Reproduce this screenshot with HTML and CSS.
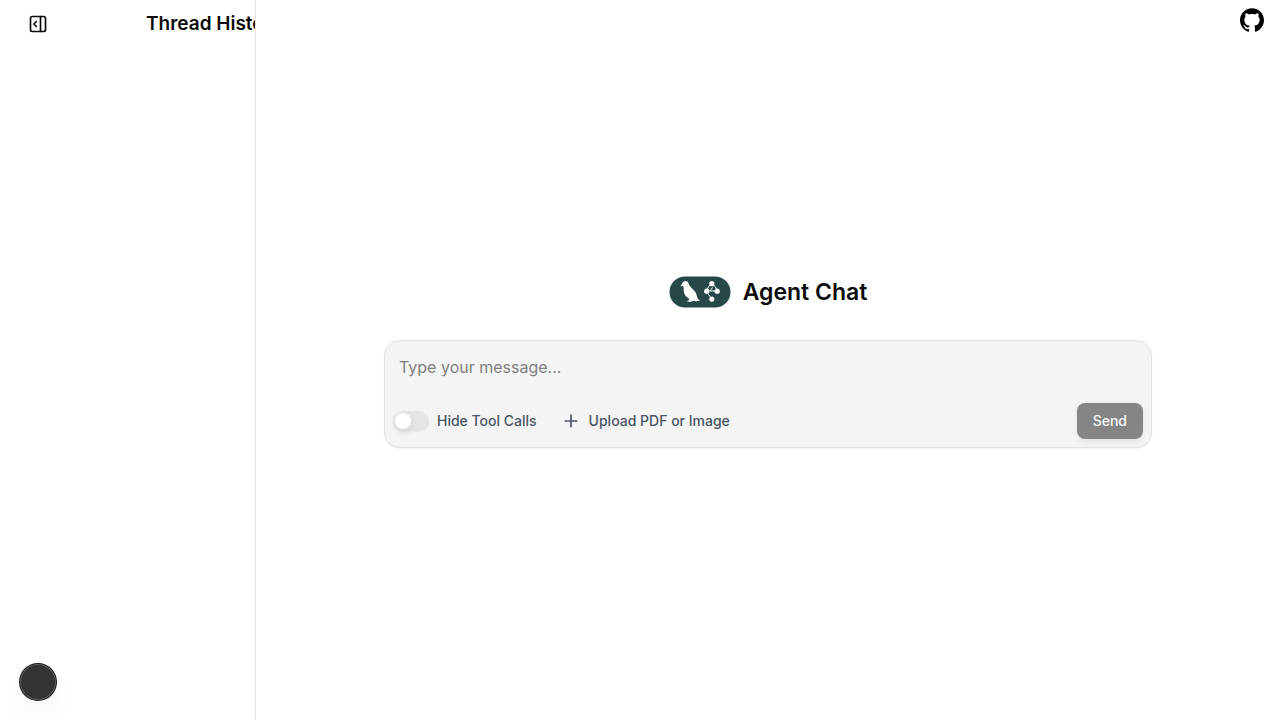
FILE: index.html
```html
<!DOCTYPE html>
<html lang="en">
<head>
<meta charset="utf-8">
<meta name="viewport" content="width=device-width, initial-scale=1">
<title>Agent Chat</title>
<link rel="stylesheet" href="styles.css">
</head>
<body>
<div class="app">
  <aside class="sidebar">
    <div class="sidebar-header">
      <button class="icon-button" type="button" aria-label="Close thread history">
        <svg class="icon" viewBox="0 0 24 24" aria-hidden="true"><rect width="18" height="18" x="3" y="3" rx="2"/><path d="M15 3v18"/><path d="m10 15-3-3 3-3"/></svg>
      </button>
      <h2 class="sidebar-title">Thread History</h2>
    </div>
  </aside>
  <main class="main">
    <header class="topbar">
      <a class="github" href="#" aria-label="Open GitHub repo">
        <svg viewBox="0 0 24 24" aria-hidden="true"><path d="M12 .297c-6.63 0-12 5.373-12 12 0 5.303 3.438 9.8 8.205 11.385.6.113.82-.258.82-.577 0-.285-.01-1.04-.015-2.04-3.338.724-4.042-1.61-4.042-1.61C4.422 18.07 3.633 17.7 3.633 17.7c-1.087-.744.084-.729.084-.729 1.205.084 1.838 1.236 1.838 1.236 1.07 1.835 2.809 1.305 3.495.998.108-.776.417-1.305.76-1.605-2.665-.3-5.466-1.332-5.466-5.93 0-1.31.465-2.38 1.235-3.22-.135-.303-.54-1.523.105-3.176 0 0 1.005-.322 3.3 1.23.96-.267 1.98-.399 3-.405 1.02.006 2.04.138 3 .405 2.28-1.552 3.285-1.23 3.285-1.23.645 1.653.24 2.873.12 3.176.765.84 1.23 1.91 1.23 3.22 0 4.61-2.805 5.625-5.475 5.92.42.36.81 1.096.81 2.22 0 1.606-.015 2.896-.015 3.286 0 .315.21.69.825.57C20.565 22.092 24 17.592 24 12.297c0-6.627-5.373-12-12-12"/></svg>
      </a>
    </header>
    <section class="welcome">
      <div class="brand">
        <svg class="logo" viewBox="0 0 62 32" aria-hidden="true">
          <rect class="logo-pill" x=".5" y=".5" width="61" height="31" rx="15.5"/>
          <path class="logo-shape" d="M11.4 10.2c.2-1 .8-1.5 1.6-1.8.2-2.1 1.6-3.4 3.4-3.4 1.7 0 2.9 1 3.2 2.6.3 1.5.9 2.3 2 3.4 3.2 3 5.8 5.3 6.3 9.3.2 1.3.8 2.3 1.6 3.1l1.8 1.6-2.8-.2-1.2.6-2.2-.7-1.7.2c-.6.3-.8.9-1.5 1l-.6-.5-1.1.6-.4-.6-2 .2 1-1.2 1.4-.5-.3-1.3c-3.2-1.6-5-4.3-5.2-7.5-.1-2.2.2-3.9-.6-5.1z"/>
          <g class="logo-links"><path d="M41.6 8.6Q39 10.5 38.3 13.5M44 8.6Q46.8 10.5 47.7 13.5M38.8 17.3l2.2 3.4M39 15h7.5M41 15l2.5-3.5"/></g>
          <g class="logo-shape"><circle cx="42.8" cy="7.7" r="2.6"/><circle cx="37.7" cy="15.2" r="2.6"/><circle cx="48.2" cy="15.2" r="2.6"/><circle cx="42.8" cy="23.1" r="2.6"/></g>
        </svg>
        <h1 class="brand-title">Agent Chat</h1>
      </div>
      <form class="composer">
        <textarea class="message" rows="1" placeholder="Type your message..." aria-label="Message"></textarea>
        <div class="actions">
          <label class="option">
            <input class="switch" type="checkbox" role="switch">
            <span>Hide Tool Calls</span>
          </label>
          <button class="upload" type="button">
            <svg class="icon" viewBox="0 0 24 24" aria-hidden="true"><path d="M5 12h14M12 5v14"/></svg>
            <span>Upload PDF or Image</span>
          </button>
          <button class="send" type="submit" disabled>Send</button>
        </div>
      </form>
    </section>
  </main>
  <button class="dev-badge" type="button" aria-label="Open developer tools"></button>
</div>
</body>
</html>
```
FILE: styles.css
```css
* {
  box-sizing: border-box;
}

body {
  margin: 0;
  background: #fff;
  color: #0a0a0a;
  font-family: Inter, "Liberation Sans", sans-serif;
  font-size: 14px;
  line-height: 20px;
}

button,
textarea {
  font: inherit;
  color: inherit;
  border: 0;
  background: none;
}

h1,
h2 {
  margin: 0;
  font-weight: 600;
}

.app {
  display: flex;
  min-height: 100vh;
}

.sidebar {
  flex: 0 0 256px;
  overflow: hidden;
  border-right: 1px solid #e2e2e2;
}

.sidebar-header {
  display: flex;
  align-items: center;
  gap: 90px;
  padding: 6px 0 0 20px;
}

.icon-button {
  display: flex;
  flex: none;
  padding: 8px;
  border-radius: 6px;
}

.icon {
  width: 20px;
  height: 20px;
  fill: none;
  stroke: currentColor;
  stroke-width: 2;
  stroke-linecap: round;
  stroke-linejoin: round;
}

.sidebar-title {
  font-size: 19px;
  line-height: 28px;
  white-space: nowrap;
}

.main {
  display: grid;
  flex: 1;
  grid-template-rows: 1fr auto 1fr;
  min-width: 0;
}

.topbar {
  display: flex;
  justify-content: flex-end;
  align-items: flex-start;
  padding: 8px 16px;
}

.github {
  display: flex;
}

.github svg {
  width: 24px;
  height: 24px;
  fill: #000;
}

.welcome {
  display: flex;
  flex-direction: column;
  gap: 32px;
  width: 100%;
  max-width: 768px;
  margin: 0 auto;
  padding-top: 4px;
}

.brand {
  display: flex;
  justify-content: center;
  align-items: center;
  gap: 12px;
}

.logo {
  width: 62px;
  height: 32px;
}

.logo-pill {
  fill: #264849;
}

.logo-shape {
  fill: #fff;
}

.logo-links {
  fill: none;
  stroke: #fff;
  stroke-width: 1;
}

.brand-title {
  font-size: 23px;
  line-height: 32px;
}

.composer {
  display: flex;
  flex-direction: column;
  border: 1px solid #e2e2e2;
  border-radius: 16px;
  background: #f4f4f4;
  box-shadow: 0 1px 2px rgb(0 0 0 / 6%);
}

.message {
  padding: 14px 14px 0;
  height: 54px;
  font-size: 16px;
  line-height: 24px;
  resize: none;
  outline: none;
}

.message::placeholder {
  color: #7f7f7f;
  opacity: 1;
}

.actions {
  display: flex;
  align-items: center;
  gap: 24px;
  padding: 8px;
}

.option,
.upload {
  display: flex;
  align-items: center;
  gap: 8px;
  padding: 0;
  color: #4a5565;
  font-weight: 500;
}

.switch {
  appearance: none;
  display: flex;
  align-items: center;
  width: 36px;
  height: 20px;
  margin: 0;
  padding: 0 2px;
  border-radius: 10px;
  background: #e5e5e5;
  box-shadow: 0 1px 2px rgb(0 0 0 / 5%);
}

.switch::before {
  content: "";
  width: 16px;
  height: 16px;
  border-radius: 50%;
  background: #fff;
  box-shadow: 0 4px 8px rgb(0 0 0 / 8%);
}

.switch:checked {
  justify-content: flex-end;
  background: #171717;
}

.send {
  height: 36px;
  margin-left: auto;
  padding: 0 16px;
  border-radius: 8px;
  background: #858585;
  color: #fafafa;
  font-weight: 500;
  box-shadow: 0 3px 6px rgb(0 0 0 / 7%);
}

.dev-badge {
  position: fixed;
  left: 20px;
  bottom: 20px;
  width: 36px;
  height: 36px;
  padding: 0;
  border-radius: 50%;
  background: #333;
  box-shadow: 0 0 0 1px #171717, inset 0 0 0 1px #5a5a5a, 0 16px 32px -8px rgb(0 0 0 / 12%);
}
```
